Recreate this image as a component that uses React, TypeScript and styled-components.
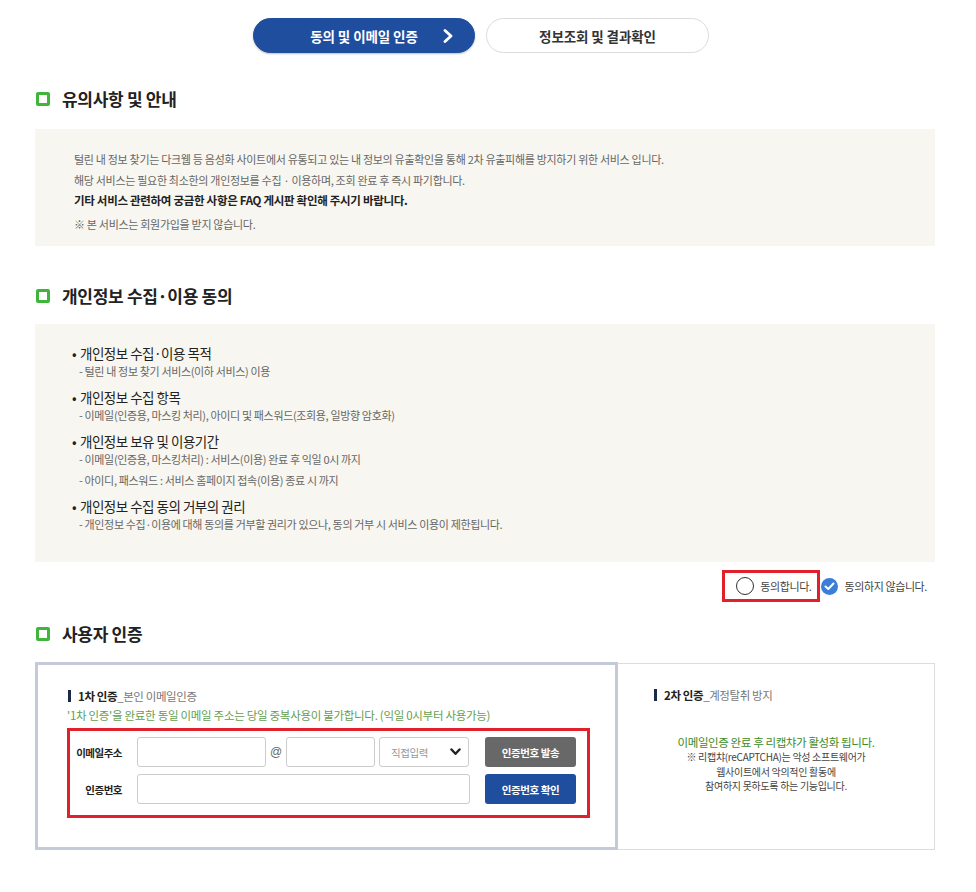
import React from "react";
import styled, { createGlobalStyle } from "styled-components";

const Global = createGlobalStyle`
  html, body { margin: 0; padding: 0; background: #fff; }
  body { font-family: "Noto Sans CJK KR", "Noto Sans", sans-serif; color: #222; }
  * { box-sizing: border-box; }
`;

const Page = styled.div`
  width: 900px;
  margin-left: 35px;
  padding: 18px 0 40px;
`;

const Steps = styled.div`
  display: flex;
  justify-content: center;
  gap: 11px;
  padding-right: 8px;
`;

const StepTab = styled.div<{ $active?: boolean }>`
  width: ${(p) => (p.$active ? "222px" : "223px")};
  height: 35px;
  border-radius: 18px;
  display: grid;
  grid-template-columns: 1fr auto 1fr;
  align-items: center;
  font-size: 13.5px;
  font-weight: 700;
  letter-spacing: -0.1px;
  background: ${(p) => (p.$active ? "#1f4e9f" : "#fff")};
  color: ${(p) => (p.$active ? "#fff" : "#333")};
  border: 1px solid ${(p) => (p.$active ? "#1f4e9f" : "#dcdcdc")};
  box-shadow: ${(p) => (p.$active ? "0 1px 2px rgba(0,0,0,0.25)" : "none")};
`;

const StepLabel = styled.span`
  grid-column: 2;
`;

const StepArrow = styled.svg`
  grid-column: 3;
  justify-self: end;
  margin-right: 21px;
`;

const SectionTitle = styled.h2<{ $top: number }>`
  display: flex;
  align-items: center;
  gap: 12px;
  margin: ${(p) => p.$top}px 0 0;
  padding-left: 1px;
  font-size: 17px;
  font-weight: 700;
  line-height: 20px;
  letter-spacing: -0.3px;
  color: #222;
`;

const TitleMark = styled.span`
  width: 14px;
  height: 14px;
  border: 3px solid #3fb53b;
  border-radius: 2px;
  flex: none;
`;

const InfoBox = styled.div<{ $top: number }>`
  margin-top: ${(p) => p.$top}px;
  background: #f8f6f0;
`;

const NoticeBox = styled(InfoBox)`
  padding: 20px 20px 12px 39px;
`;

const NoticeLine = styled.p<{ $strong?: boolean; $gap?: number }>`
  margin: ${(p) => p.$gap || 0}px 0 0;
  line-height: 20px;
  font-size: ${(p) => (p.$strong ? "11.5px" : "11px")};
  font-weight: ${(p) => (p.$strong ? 700 : 400)};
  letter-spacing: -0.3px;
  color: ${(p) => (p.$strong ? "#222" : "#666")};
`;

const ConsentBox = styled(InfoBox)`
  padding: 20px 20px 29px 37px;
`;

const ConsentGroup = styled.div`
  margin-bottom: 8px;
  &:last-child { margin-bottom: 0; }
`;

const ConsentHead = styled.div`
  font-size: 13.5px;
  line-height: 18px;
  letter-spacing: -0.5px;
  color: #222;
  &::before {
    content: "•";
    display: inline-block;
    width: 8px;
  }
`;

const ConsentSub = styled.div`
  padding-left: 7px;
  font-size: 11px;
  line-height: 18px;
  letter-spacing: -0.35px;
  color: #666;
  & + & { margin-top: 3px; }
`;

const AgreeRow = styled.div`
  margin-top: 8px;
  display: flex;
  justify-content: flex-end;
  align-items: center;
  padding-right: 8px;
  font-size: 11px;
  letter-spacing: -0.4px;
  color: #444;
`;

const AgreeOption = styled.label<{ $marked?: boolean }>`
  display: flex;
  align-items: center;
  gap: ${(p) => (p.$marked ? "6px" : "7px")};
  height: 32px;
  padding: ${(p) => (p.$marked ? "0 5px 0 11px" : "0 0 0 1px")};
  border: ${(p) => (p.$marked ? "3px solid #e0202a" : "none")};
`;

const RadioCircle = styled.span`
  width: 18px;
  height: 18px;
  border-radius: 50%;
  border: 1px solid #333;
  background: #fff;
`;

const CheckCircle = styled.span`
  width: 17px;
  height: 17px;
  border-radius: 50%;
  background: #3b7dd8;
  display: flex;
  align-items: center;
  justify-content: center;
`;

const AuthGrid = styled.div`
  margin-top: 18px;
  display: grid;
  grid-template-columns: 583px 1fr;
`;

const AuthMain = styled.div`
  border: 3px solid #c4cad8;
  padding: 24px 25px 29px 29px;
`;

const AuthSide = styled.div`
  margin-top: 1px;
  border: 1px solid #dddddd;
  border-left: none;
  padding: 24px 20px 20px 35px;
`;

const AuthTitle = styled.div`
  display: flex;
  align-items: center;
  gap: 7px;
  margin-left: 1px;
  font-size: 11.5px;
  line-height: 14px;
  letter-spacing: -0.4px;
  color: #777;
  &::before {
    content: "";
    width: 3px;
    height: 12px;
    background: #1b2a48;
  }
  b { color: #222; font-weight: 700; }
`;

const GreenNote = styled.p`
  margin: 4px 0 0;
  font-size: 11.5px;
  line-height: 16px;
  letter-spacing: -0.3px;
  color: #63a04f;
`;

const FormBox = styled.div`
  margin-top: 5px;
  border: 3px solid #e0202a;
  padding: 6px 11px 11px 0;
  display: grid;
  row-gap: 7px;
`;

const FormRow = styled.div`
  display: grid;
  grid-template-columns: 52px 333px 91px;
  column-gap: 15px;
  align-items: center;
  height: 30px;
`;

const FieldLabel = styled.span`
  text-align: right;
  font-size: 10.5px;
  font-weight: 700;
  letter-spacing: -0.5px;
  color: #222;
`;

const FieldGroup = styled.div`
  display: flex;
  align-items: center;
  height: 30px;
`;

const TextInput = styled.input<{ $w?: number }>`
  width: ${(p) => (p.$w ? `${p.$w}px` : "100%")};
  height: 30px;
  border: 1px solid #cccccc;
  border-radius: 3px;
  padding: 0 8px;
  font-family: inherit;
  font-size: 11px;
  outline: none;
  flex: none;
`;

const At = styled.span`
  width: 20px;
  text-align: center;
  font-size: 12px;
  color: #666;
  font-family: "Liberation Sans", sans-serif;
`;

const SelectWrap = styled.div`
  position: relative;
  width: 90px;
  margin-left: 4px;
  height: 30px;
`;

const Select = styled.select`
  appearance: none;
  width: 100%;
  height: 30px;
  border: 1px solid #cccccc;
  border-radius: 3px;
  background: #fff;
  padding: 0 0 0 11px;
  font-family: inherit;
  font-size: 10.5px;
  letter-spacing: -0.4px;
  color: #999;
  outline: none;
`;

const SelectArrow = styled.svg`
  position: absolute;
  right: 8px;
  top: 11px;
  pointer-events: none;
`;

const ActionButton = styled.button<{ $tone: "gray" | "blue" }>`
  height: 30px;
  width: 91px;
  border: none;
  border-radius: 3px;
  background: ${(p) => (p.$tone === "gray" ? "#686868" : "#1f4e9f")};
  color: #fff;
  font-family: inherit;
  font-size: 10.5px;
  font-weight: 700;
  letter-spacing: -0.4px;
  cursor: pointer;
`;

const SideBody = styled.div`
  margin-top: 32px;
  margin-left: -35px;
  margin-right: -20px;
  text-align: center;
`;

const SideLead = styled.p`
  margin: 0;
  font-size: 11.5px;
  line-height: 16px;
  letter-spacing: -0.4px;
  color: #3d8b1e;
`;

const SideLine = styled.div`
  font-size: 10px;
  line-height: 14.5px;
  letter-spacing: -0.3px;
  color: #444;
`;

export default function App() {
  return (
    <>
      <Global />
      <Page>
        <Steps>
          <StepTab $active>
            <StepLabel>동의 및 이메일 인증</StepLabel>
            <StepArrow width="10" height="14" viewBox="0 0 10 14">
              <polyline points="2,1.5 8,7 2,12.5" fill="none" stroke="#fff" strokeWidth="2.8" strokeLinecap="round" strokeLinejoin="round" />
            </StepArrow>
          </StepTab>
          <StepTab>
            <StepLabel>정보조회 및 결과확인</StepLabel>
          </StepTab>
        </Steps>

        <SectionTitle $top={36}>
          <TitleMark />
          유의사항 및 안내
        </SectionTitle>
        <NoticeBox $top={20}>
          <NoticeLine>털린 내 정보 찾기는 다크웹 등 음성화 사이트에서 유통되고 있는 내 정보의 유출확인을 통해 2차 유출피해를 방지하기 위한 서비스 입니다.</NoticeLine>
          <NoticeLine $gap={1}>해당 서비스는 필요한 최소한의 개인정보를 수집 · 이용하며, 조회 완료 후 즉시 파기합니다.</NoticeLine>
          <NoticeLine $strong>기타 서비스 관련하여 궁금한 사항은 FAQ 게시판 확인해 주시기 바랍니다.</NoticeLine>
          <NoticeLine $gap={4}>※ 본 서비스는 회원가입을 받지 않습니다.</NoticeLine>
        </NoticeBox>

        <SectionTitle $top={40}>
          <TitleMark />
          개인정보 수집·이용 동의
        </SectionTitle>
        <ConsentBox $top={18}>
          <ConsentGroup>
            <ConsentHead>개인정보 수집·이용 목적</ConsentHead>
            <ConsentSub>- 털린 내 정보 찾기 서비스(이하 서비스) 이용</ConsentSub>
          </ConsentGroup>
          <ConsentGroup>
            <ConsentHead>개인정보 수집 항목</ConsentHead>
            <ConsentSub>- 이메일(인증용, 마스킹 처리), 아이디 및 패스워드(조회용, 일방향 암호화)</ConsentSub>
          </ConsentGroup>
          <ConsentGroup>
            <ConsentHead>개인정보 보유 및 이용기간</ConsentHead>
            <ConsentSub>- 이메일(인증용, 마스킹처리) : 서비스(이용) 완료 후 익일 0시 까지</ConsentSub>
            <ConsentSub>- 아이디, 패스워드 : 서비스 홈페이지 접속(이용) 종료 시 까지</ConsentSub>
          </ConsentGroup>
          <ConsentGroup>
            <ConsentHead>개인정보 수집 동의 거부의 권리</ConsentHead>
            <ConsentSub>- 개인정보 수집·이용에 대해 동의를 거부할 권리가 있으나, 동의 거부 시 서비스 이용이 제한됩니다.</ConsentSub>
          </ConsentGroup>
        </ConsentBox>

        <AgreeRow>
          <AgreeOption $marked>
            <RadioCircle />
            동의합니다.
          </AgreeOption>
          <AgreeOption>
            <CheckCircle>
              <svg width="11" height="9" viewBox="0 0 11 9">
                <polyline points="1.5,4.5 4.3,7 9.5,1.5" fill="none" stroke="#fff" strokeWidth="2" strokeLinecap="round" strokeLinejoin="round" />
              </svg>
            </CheckCircle>
            동의하지 않습니다.
          </AgreeOption>
        </AgreeRow>

        <SectionTitle $top={22}>
          <TitleMark />
          사용자 인증
        </SectionTitle>
        <AuthGrid>
          <AuthMain>
            <AuthTitle>
              <span>
                <b>1차 인증</b>_본인 이메일인증
              </span>
            </AuthTitle>
            <GreenNote>'1차 인증'을 완료한 동일 이메일 주소는 당일 중복사용이 불가합니다. (익일 0시부터 사용가능)</GreenNote>
            <FormBox>
              <FormRow>
                <FieldLabel>이메일주소</FieldLabel>
                <FieldGroup>
                  <TextInput $w={129} />
                  <At>@</At>
                  <TextInput $w={89} />
                  <SelectWrap>
                    <Select defaultValue="">
                      <option value="">직접입력</option>
                    </Select>
                    <SelectArrow width="11" height="8" viewBox="0 0 11 8">
                      <polyline points="1.5,1.5 5.5,5.8 9.5,1.5" fill="none" stroke="#222" strokeWidth="2.4" strokeLinecap="round" strokeLinejoin="round" />
                    </SelectArrow>
                  </SelectWrap>
                </FieldGroup>
                <ActionButton $tone="gray">인증번호 발송</ActionButton>
              </FormRow>
              <FormRow>
                <FieldLabel>인증번호</FieldLabel>
                <TextInput />
                <ActionButton $tone="blue">인증번호 확인</ActionButton>
              </FormRow>
            </FormBox>
          </AuthMain>
          <AuthSide>
            <AuthTitle>
              <span>
                <b>2차 인증</b>_계정탈취 방지
              </span>
            </AuthTitle>
            <SideBody>
              <SideLead>이메일인증 완료 후 리캡챠가 활성화 됩니다.</SideLead>
              <SideLine>※ 리캡챠(reCAPTCHA)는 악성 소프트웨어가</SideLine>
              <SideLine>웹사이트에서 악의적인 활동에</SideLine>
              <SideLine>참여하지 못하도록 하는 기능입니다.</SideLine>
            </SideBody>
          </AuthSide>
        </AuthGrid>
      </Page>
    </>
  );
}
